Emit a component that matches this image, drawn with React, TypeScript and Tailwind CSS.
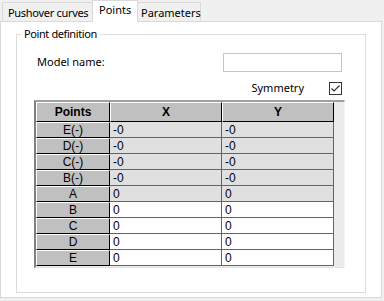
const rows = [
  { name: "E(-)", x: "-0", y: "-0", shaded: true },
  { name: "D(-)", x: "-0", y: "-0", shaded: true },
  { name: "C(-)", x: "-0", y: "-0", shaded: true },
  { name: "B(-)", x: "-0", y: "-0", shaded: true },
  { name: "A", x: "0", y: "0", shaded: true },
  { name: "B", x: "0", y: "0", shaded: false },
  { name: "C", x: "0", y: "0", shaded: false },
  { name: "D", x: "0", y: "0", shaded: false },
  { name: "E", x: "0", y: "0", shaded: false },
];

const ui = "font-['Noto_Sans',sans-serif] text-[11px] text-black whitespace-nowrap";
const grid = "font-['Liberation_Sans',Arial,sans-serif] text-[12px] text-black";
const btn =
  "bg-[#c0c0c0] border-t border-l border-t-white border-l-white border-b border-r border-b-black border-r-black";

export default function App() {
  return (
    <div className={`w-[384px] h-[301px] bg-[#f0f0f0] overflow-hidden ${ui}`}>
      {/* Tabs */}
      <div className="flex items-start h-[21px] pl-[2px]">
        <div className="mt-[2px] h-[19px] w-[90px] border-l border-t border-[#d9d9d9] bg-[#f0f0f0] pl-[5px] leading-[19px] tracking-[-0.3px]">
          Pushover curves
        </div>
        <div className="relative z-10 h-[22px] w-[46px] border-l border-t border-r border-[#d9d9d9] bg-white pl-[6px] leading-[18px]">
          Points
        </div>
        <div className="mt-[2px] h-[19px] w-[63px] border-t border-r border-[#d9d9d9] bg-[#f0f0f0] pl-[3px] leading-[19px]">
          Parameters
        </div>
      </div>

      {/* Panel */}
      <div className="w-[382px] h-[277px] border border-[#d9d9d9] bg-white">
        <fieldset className="ml-[15px] mt-[4px] w-[350px] h-[267px] border border-[#dcdcdc]">
          <legend className="ml-[4px] px-[3px] leading-[16px] tracking-[-0.4px]">Point definition</legend>

          <div className="flex items-center justify-between h-[19px] mt-[11px] pl-[20px] pr-[23px]">
            <span>Model name:</span>
            <div className="w-[119px] h-[19px] border border-[#c5c5c5] bg-white" />
          </div>

          <div className="flex items-center justify-end h-[13px] mt-[10px] pr-[23px] gap-[25px]">
            <span>Symmetry</span>
            <div className="w-[13px] h-[13px] border border-[#333333] bg-white flex items-center justify-center">
              <svg width="11" height="11" viewBox="0 0 11 11">
                <path d="M1.5 5.5 L4 8 L9.5 2.5" fill="none" stroke="#333333" strokeWidth="1.2" />
              </svg>
            </div>
          </div>

          {/* Grid */}
          <div
            className={`mt-[5px] ml-[17px] w-[311px] h-[168px] bg-[#ebebeb] border-t-2 border-l-2 border-t-[#a0a0a0] border-l-[#808080] border-b border-r border-b-[#e3e3e3] border-r-[#f5f5f5] ${grid}`}
          >
            <div className="flex h-[20px]">
              <div className={`w-[74px] ${btn} flex items-center justify-center font-bold`}>Points</div>
              <div className={`w-[112px] ${btn} flex items-center justify-center font-bold`}>X</div>
              <div className={`w-[112px] ${btn} flex items-center justify-center font-bold`}>Y</div>
            </div>
            {rows.map((r) => (
              <div key={r.name} className="flex h-[16px]">
                <div className={`w-[74px] ${btn} flex items-center justify-center`}>{r.name}</div>
                <div
                  className={`w-[112px] border-r border-b border-[#646464] pl-[3px] flex items-center ${r.shaded ? "bg-[#e0e0e0]" : "bg-white"}`}
                >
                  {r.x}
                </div>
                <div
                  className={`w-[112px] border-r border-b border-[#646464] pl-[3px] flex items-center ${r.shaded ? "bg-[#e0e0e0]" : "bg-white"}`}
                >
                  {r.y}
                </div>
              </div>
            ))}
          </div>
        </fieldset>
      </div>
    </div>
  );
}
